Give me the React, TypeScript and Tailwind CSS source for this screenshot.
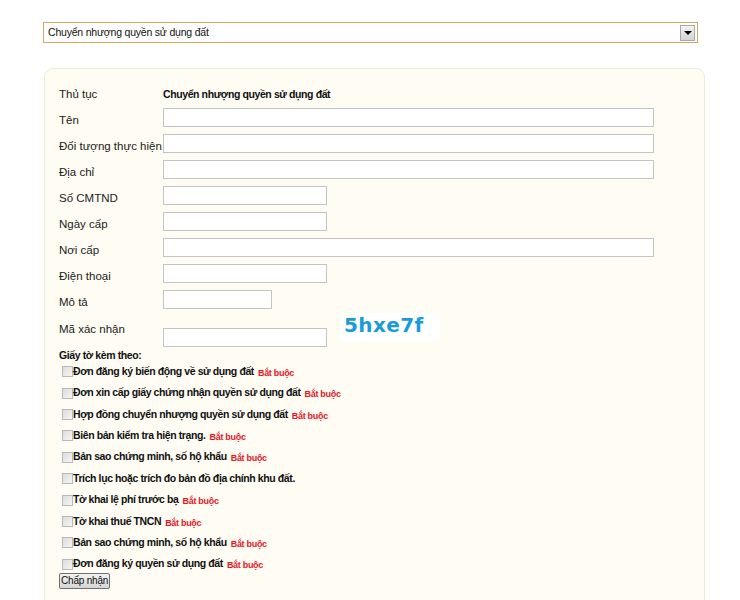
import React from "react";

const fields: { label: string; width: string }[] = [
  { label: "Tên", width: "w-[491px]" },
  { label: "Đối tượng thực hiện", width: "w-[491px]" },
  { label: "Địa chỉ", width: "w-[491px]" },
  { label: "Số CMTND", width: "w-[164px]" },
  { label: "Ngày cấp", width: "w-[164px]" },
  { label: "Nơi cấp", width: "w-[491px]" },
  { label: "Điện thoại", width: "w-[164px]" },
  { label: "Mô tả", width: "w-[109px]" },
];

const docs: { name: string; required: boolean }[] = [
  { name: "Đơn đăng ký biến động về sử dụng đất", required: true },
  { name: "Đơn xin cấp giấy chứng nhận quyền sử dụng đất", required: true },
  { name: "Hợp đồng chuyển nhượng quyền sử dụng đất", required: true },
  { name: "Biên bản kiểm tra hiện trạng.", required: true },
  { name: "Bản sao chứng minh, số hộ khẩu", required: true },
  { name: "Trích lục hoặc trích đo bản đồ địa chính khu đất.", required: false },
  { name: "Tờ khai lệ phí trước bạ", required: true },
  { name: "Tờ khai thuế TNCN", required: true },
  { name: "Bản sao chứng minh, số hộ khẩu", required: true },
  { name: "Đơn đăng ký quyền sử dụng đất", required: true },
];

function TextBox({ width }: { width: string }) {
  return <div className={`${width} h-[19px] bg-white border border-[#c4c4c4]`} />;
}

export default function App() {
  return (
    <main className="w-[740px] h-[600px] overflow-hidden bg-white text-[#222] font-['Liberation_Sans',Arial,sans-serif]">
      {/* Procedure select */}
      <div className="pt-[22px] pl-[43px]">
        <div className="w-[655px] h-[21px] flex items-center justify-between border border-[#cfa95c] bg-white pl-[4px] pr-[2px]">
          <span className="text-[10.5px] tracking-[-0.2px] text-[#111]">Chuyển nhượng quyền sử dụng đất</span>
          <div className="w-[15px] h-[16px] flex items-center justify-center border border-[#a8a8a8] bg-gradient-to-b from-[#f4f4f4] to-[#d4d4d4]">
            <div className="w-0 h-0 border-l-[4px] border-r-[4px] border-t-[4px] border-l-transparent border-r-transparent border-t-black" />
          </div>
        </div>
      </div>

      {/* Form card */}
      <div className="ml-[44px] mt-[25px] w-[661px] h-[560px] rounded-[9px] border border-[#efe9d9] bg-[#fffcf4] pl-[14px] pt-[12px]">
        <div className="flex items-start h-[26px]">
          <span className="w-[104px] mt-[6px] text-[11.5px] leading-[14px]">Thủ tục</span>
          <span className="mt-[6px] text-[10.5px] leading-[14px] tracking-[-0.4px] font-bold text-[#111]">
            Chuyển nhượng quyền sử dụng đất
          </span>
        </div>

        {fields.map((f) => (
          <div key={f.label} className="flex items-start h-[26px]">
            <span className="w-[104px] mt-[6px] text-[11.5px] leading-[14px] whitespace-nowrap">{f.label}</span>
            <div className="mt-[1px]">
              <TextBox width={f.width} />
            </div>
          </div>
        ))}

        <div className="flex items-start h-[34px]">
          <span className="w-[104px] mt-[7px] text-[11.5px] leading-[14px]">Mã xác nhận</span>
          <div className="mt-[13px]">
            <TextBox width="w-[164px]" />
          </div>
          <div className="ml-[13px] -mt-[2px] w-[100px] h-[29px] bg-white flex items-center pl-[4px] pb-[6px]">
            <span className="text-[20px] font-bold text-[#1a9bd7] font-['DejaVu_Sans',Verdana,sans-serif] tracking-[0.4px]">
              5hxe7f
            </span>
          </div>
        </div>

        <div className="text-[10.5px] tracking-[-0.4px] font-bold text-[#111] h-[12px] leading-[12px]">
          Giấy tờ kèm theo:
        </div>

        <div>
          {docs.map((d, i) => (
            <div key={i} className="flex items-center h-[21.4px] pl-[3px]">
              <div className="w-[11px] h-[11px] border border-[#b9b9b9] bg-gradient-to-br from-[#dcdcdc] to-[#f6f6f6]" />
              <span className="flex items-baseline">
                <span className="text-[10.5px] tracking-[-0.4px] font-bold text-[#111] whitespace-nowrap">{d.name}</span>
                {d.required && (
                  <span className="ml-[4px] text-[9px] tracking-[-0.3px] font-bold text-[#e8141e] translate-y-[1px]">
                    Bắt buộc
                  </span>
                )}
              </span>
            </div>
          ))}
        </div>

        <button className="block -mt-[2px] h-[16px] px-[1px] text-[10px] tracking-[-0.2px] leading-[14px] text-[#111] border border-[#707070] rounded-[2px] bg-gradient-to-b from-[#f2f2f2] to-[#d6d6d6]">
          Chấp nhận
        </button>
      </div>
    </main>
  );
}
